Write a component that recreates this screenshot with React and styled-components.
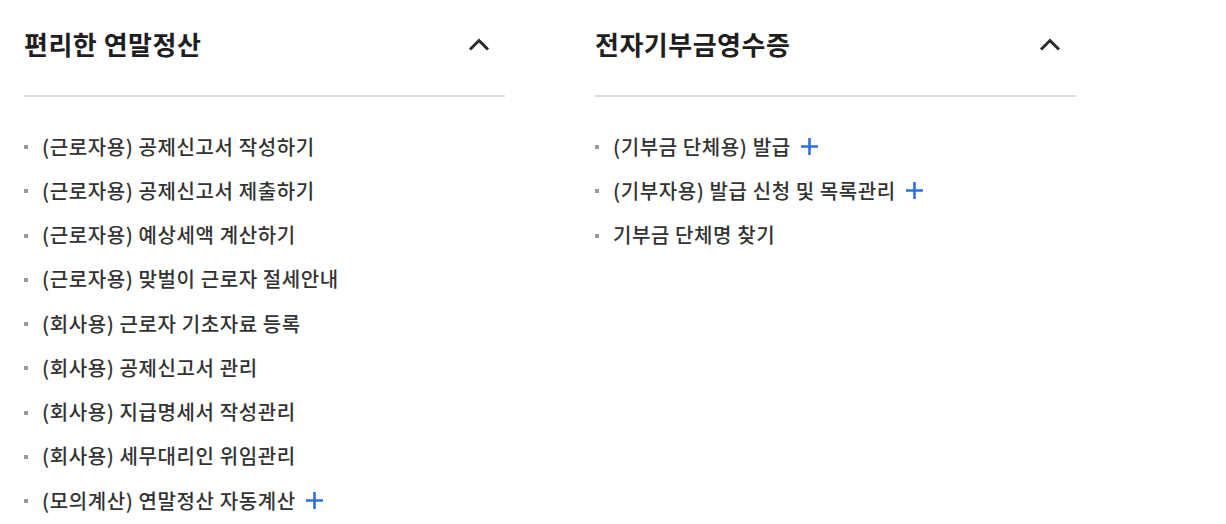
import React from "react";
import styled, { createGlobalStyle } from "styled-components";

const GlobalStyle = createGlobalStyle`
  body {
    margin: 0;
    background: #fff;
    font-family: "Noto Sans CJK KR", "Noto Sans", sans-serif;
    color: #222;
  }
`;

const Page = styled.div`
  display: flex;
  gap: 90px;
  padding-left: 24px;
`;

const Column = styled.section`
  width: 481px;
`;

const Header = styled.div`
  display: flex;
  justify-content: space-between;
  align-items: center;
  padding: 26px 15px 33px 0;
  border-bottom: 2px solid #dcdde1;
`;

const Title = styled.h2`
  margin: 0;
  font-size: 26px;
  line-height: 36px;
  font-weight: 600;
  color: #1f1f1f;
  letter-spacing: 0.5px;
`;

const Toggle = styled.button`
  border: none;
  background: none;
  padding: 0;
  width: 22px;
  height: 14px;
  display: flex;
  cursor: pointer;
`;

const List = styled.ul`
  list-style: none;
  margin: 0;
  padding: 27px 0 0;
`;

const Item = styled.li`
  display: flex;
  align-items: center;
  height: 44.25px;
  font-size: 20px;
  font-weight: 500;
  letter-spacing: 0.6px;
  color: #333;

  &::before {
    content: "";
    width: 4px;
    height: 4px;
    background: #999;
    margin: 2px 14px 0 0;
    flex: none;
  }
`;

const Plus = styled.span`
  display: inline-flex;
  margin-left: 10px;
  margin-top: 1px;
`;

const Chevron = () => (
  <svg width="22" height="14" viewBox="0 0 22 14">
    <path d="M2 12.5 L11 3.5 L20 12.5" fill="none" stroke="#2a2a2a" strokeWidth="3" />
  </svg>
);

const PlusIcon = () => (
  <svg width="17" height="17" viewBox="0 0 17 17">
    <path d="M8.5 0 V17 M0 8.5 H17" stroke="#2c6fe6" strokeWidth="2.6" />
  </svg>
);

const sections = [
  {
    title: "편리한 연말정산",
    items: [
      { label: "(근로자용) 공제신고서 작성하기" },
      { label: "(근로자용) 공제신고서 제출하기" },
      { label: "(근로자용) 예상세액 계산하기" },
      { label: "(근로자용) 맞벌이 근로자 절세안내" },
      { label: "(회사용) 근로자 기초자료 등록" },
      { label: "(회사용) 공제신고서 관리" },
      { label: "(회사용) 지급명세서 작성관리" },
      { label: "(회사용) 세무대리인 위임관리" },
      { label: "(모의계산) 연말정산 자동계산", more: true },
    ],
  },
  {
    title: "전자기부금영수증",
    items: [
      { label: "(기부금 단체용) 발급", more: true },
      { label: "(기부자용) 발급 신청 및 목록관리", more: true },
      { label: "기부금 단체명 찾기" },
    ],
  },
];

export default function App() {
  return (
    <>
      <GlobalStyle />
      <Page>
        {sections.map((s) => (
          <Column key={s.title}>
            <Header>
              <Title>{s.title}</Title>
              <Toggle aria-label="접기">
                <Chevron />
              </Toggle>
            </Header>
            <List>
              {s.items.map((it) => (
                <Item key={it.label}>
                  {it.label}
                  {it.more && (
                    <Plus>
                      <PlusIcon />
                    </Plus>
                  )}
                </Item>
              ))}
            </List>
          </Column>
        ))}
      </Page>
    </>
  );
}
